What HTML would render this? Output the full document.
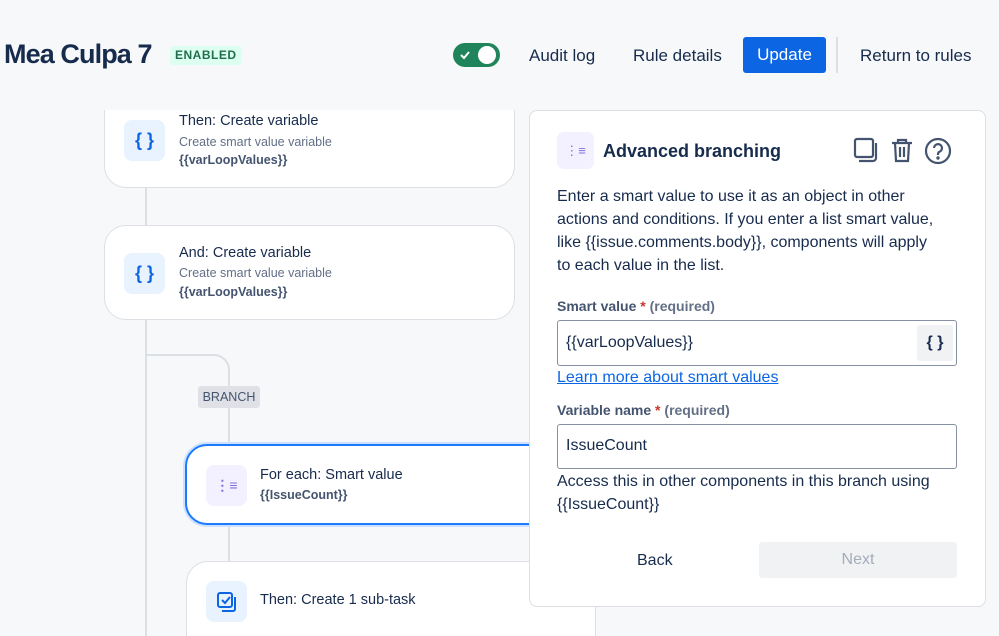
<!DOCTYPE html>
<html><head><meta charset="utf-8"><style>
*{box-sizing:border-box;margin:0;padding:0}
html,body{width:999px;height:636px;overflow:hidden}
body{background:#f7f8f9;font-family:"Liberation Sans",sans-serif;color:#172b4d;position:relative}
.abs{position:absolute}
.card{position:absolute;background:#fff;border:1px solid #dcdfe4;border-radius:22px}
.ic{position:absolute;width:41px;height:41px;border-radius:8px;background:#e9f2ff;color:#0c66e4;font-weight:bold;font-size:18px;display:flex;align-items:center;justify-content:center}
.t{position:absolute;font-size:14.5px;color:#172b4d}
.s{position:absolute;font-size:12.5px;color:#626f86}
.b{position:absolute;font-size:12.5px;color:#44546f;font-weight:bold}
.line{position:absolute;background:#dcdfe4}
</style></head><body>
<div class="line" style="left:145px;top:180px;width:2px;height:50px"></div>
<div class="line" style="left:145px;top:315px;width:2px;height:321px"></div>
<div class="abs" style="left:145px;top:354px;width:85px;height:100px;border-top:2px solid #dcdfe4;border-right:2px solid #dcdfe4;border-top-right-radius:16px"></div>
<div class="line" style="left:228px;top:520px;width:2px;height:45px"></div>

<div class="card" style="left:104px;top:60px;width:411px;height:128px">
 <div class="ic" style="left:19px;top:59px">{ }</div>
 <div class="t" style="left:74px;top:52px">Then: Create variable</div>
 <div class="s" style="left:74px;top:74px">Create smart value variable</div>
 <div class="b" style="left:74px;top:92px">{{varLoopValues}}</div>
</div>
<div class="card" style="left:104px;top:225px;width:411px;height:95px">
 <div class="ic" style="left:19px;top:27px">{ }</div>
 <div class="t" style="left:74px;top:19px">And: Create variable</div>
 <div class="s" style="left:74px;top:40px">Create smart value variable</div>
 <div class="b" style="left:74px;top:59px">{{varLoopValues}}</div>
</div>
<div class="abs" style="left:198px;top:386px;width:62px;height:22px;background:#dfe1e6;border-radius:3px;font-size:12.5px;color:#44546f;display:flex;align-items:center;justify-content:center">BRANCH</div>
<div class="card" style="left:185px;top:444px;width:410px;height:81px;border:2px solid #1d7afc;box-shadow:0 0 0 2px #cce0ff">
 <div class="ic" style="left:19px;top:19px;background:#f3f0ff;color:#8270db;font-size:14px">&#8942;&#8801;</div>
 <div class="t" style="left:73px;top:21px">For each: Smart value</div>
 <div class="b" style="left:73px;top:42px">{{IssueCount}}</div>
</div>
<div class="card" style="left:186px;top:561px;width:410px;height:100px">
 <div class="ic" style="left:19px;top:19px"><svg width="22" height="22" viewBox="0 0 22 22" fill="none" stroke="#0c66e4" stroke-width="2"><rect x="2" y="2" width="14" height="14" rx="2"/><path d="M6 9l3 3 5-6M19 6v12a2 2 0 0 1-2 2H6"/></svg></div>
 <div class="t" style="left:73px;top:30px">Then: Create 1 sub-task</div>
</div>

<div class="abs" style="left:0;top:0;width:999px;height:110px;background:#f7f8f9"></div>
<div class="abs" style="left:4px;top:39px;font-size:27px;font-weight:bold;color:#172b4d;letter-spacing:-0.9px">Mea Culpa 7</div>
<div class="abs" style="left:170px;top:46px;height:19px;padding:0 5px;background:#dcfff1;color:#216e4e;font-size:12px;font-weight:bold;border-radius:3px;line-height:19px;letter-spacing:0.5px">ENABLED</div>
<div class="abs" style="left:453px;top:43px;width:47px;height:24px;border-radius:12px;background:#1f845a">
 <svg class="abs" style="left:6px;top:6px" width="12" height="12" viewBox="0 0 12 12"><path d="M2 6l3 3 5-6" stroke="#fff" stroke-width="2" fill="none"/></svg>
 <div class="abs" style="left:25px;top:3px;width:18px;height:18px;border-radius:50%;background:#fff"></div>
</div>
<div class="abs" style="left:529px;top:46px;font-size:17px">Audit log</div>
<div class="abs" style="left:633px;top:46px;font-size:17px">Rule details</div>
<div class="abs" style="left:743px;top:37px;width:83px;height:36px;background:#0c66e4;border-radius:3px;color:#fff;font-size:17px;display:flex;align-items:center;justify-content:center">Update</div>
<div class="abs" style="left:836px;top:37px;width:2px;height:36px;background:#dcdfe4"></div>
<div class="abs" style="left:860px;top:46px;font-size:17px">Return to rules</div>

<div class="abs" style="left:529px;top:110px;width:457px;height:497px;background:#fff;border:1px solid #dcdfe4;border-radius:8px">
 <div class="abs" style="left:27px;top:21px;width:37px;height:37px;border-radius:7px;background:#f3f0ff;color:#8270db;font-size:13px;display:flex;align-items:center;justify-content:center">&#8942;&#8801;</div>
 <div class="abs" style="left:73px;top:30px;font-size:18px;font-weight:bold">Advanced branching</div>
 <svg class="abs" style="left:322px;top:25px" width="100" height="30" viewBox="0 0 100 30" fill="none" stroke="#44546f" stroke-width="2.2">
  <rect x="3" y="3" width="18" height="18" rx="2"/><path d="M24 7v15a3 3 0 0 1-3 3H7"/>
  <path d="M40 7h20M46 7V4h8v3M43 7l1 18h12l1-18M48 11v10M52 11v10"/>
  <circle cx="86" cy="15" r="12"/><path d="M82 12a4 4 0 1 1 5 4c-1 .5-1 1.5-1 3"/><circle cx="86" cy="22" r=".6" fill="#44546f"/>
 </svg>
 <div class="abs" style="left:27px;top:74px;width:420px;font-size:16px;line-height:23px;white-space:nowrap">Enter a smart value to use it as an object in other<br>actions and conditions. If you enter a list smart value,<br>like {{issue.comments.body}}, components will apply<br>to each value in the list.</div>
 <div class="abs" style="left:27px;top:187px;font-size:14px;font-weight:bold;color:#44546f">Smart value<span style="color:#c9372c"> *</span> <span style="color:#626f86">(required)</span></div>
 <div class="abs" style="left:27px;top:209px;width:400px;height:46px;border:1.5px solid #8590a2;border-radius:3px">
  <div class="abs" style="left:8px;top:13px;font-size:16px">{{varLoopValues}}</div>
  <div class="abs" style="left:359px;top:4px;width:36px;height:36px;background:#f1f2f4;border-radius:3px;font-weight:bold;font-size:16px;display:flex;align-items:center;justify-content:center">{ }</div>
 </div>
 <div class="abs" style="left:27px;top:258px;font-size:16px;color:#0c66e4;text-decoration:underline">Learn more about smart values</div>
 <div class="abs" style="left:27px;top:291px;font-size:14px;font-weight:bold;color:#44546f">Variable name<span style="color:#c9372c"> *</span> <span style="color:#626f86">(required)</span></div>
 <div class="abs" style="left:27px;top:313px;width:400px;height:45px;border:1.5px solid #8590a2;border-radius:3px">
  <div class="abs" style="left:8px;top:12px;font-size:16px">IssueCount</div>
 </div>
 <div class="abs" style="left:27px;top:359px;width:410px;font-size:16px;line-height:23px">Access this in other components in this branch using {{IssueCount}}</div>
 <div class="abs" style="left:107px;top:441px;font-size:16px;font-weight:500">Back</div>
 <div class="abs" style="left:229px;top:431px;width:198px;height:36px;background:#f1f2f4;border-radius:3px;color:#a5adba;font-size:16px;display:flex;align-items:center;justify-content:center">Next</div>
</div>
</body></html>
